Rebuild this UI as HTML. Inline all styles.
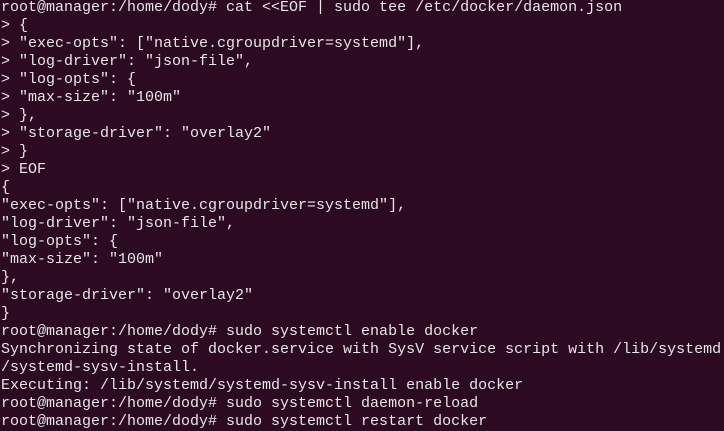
<!DOCTYPE html>
<html><head><meta charset="utf-8"><style>
html,body{margin:0;padding:0;background:#2c0a22;width:724px;height:430px;overflow:hidden}
pre{margin:0;position:absolute;left:1px;top:-1px;font-family:"Liberation Mono","DejaVu Sans Mono",monospace;font-size:15px;line-height:18px;color:#e6e6e6}
</style></head><body><pre>root@manager:/home/dody# cat &lt;&lt;EOF | sudo tee /etc/docker/daemon.json
&gt; {
&gt; "exec-opts": ["native.cgroupdriver=systemd"],
&gt; "log-driver": "json-file",
&gt; "log-opts": {
&gt; "max-size": "100m"
&gt; },
&gt; "storage-driver": "overlay2"
&gt; }
&gt; EOF
{
"exec-opts": ["native.cgroupdriver=systemd"],
"log-driver": "json-file",
"log-opts": {
"max-size": "100m"
},
"storage-driver": "overlay2"
}
root@manager:/home/dody# sudo systemctl enable docker
Synchronizing state of docker.service with SysV service script with /lib/systemd
/systemd-sysv-install.
Executing: /lib/systemd/systemd-sysv-install enable docker
root@manager:/home/dody# sudo systemctl daemon-reload
root@manager:/home/dody# sudo systemctl restart docker</pre></body></html>
